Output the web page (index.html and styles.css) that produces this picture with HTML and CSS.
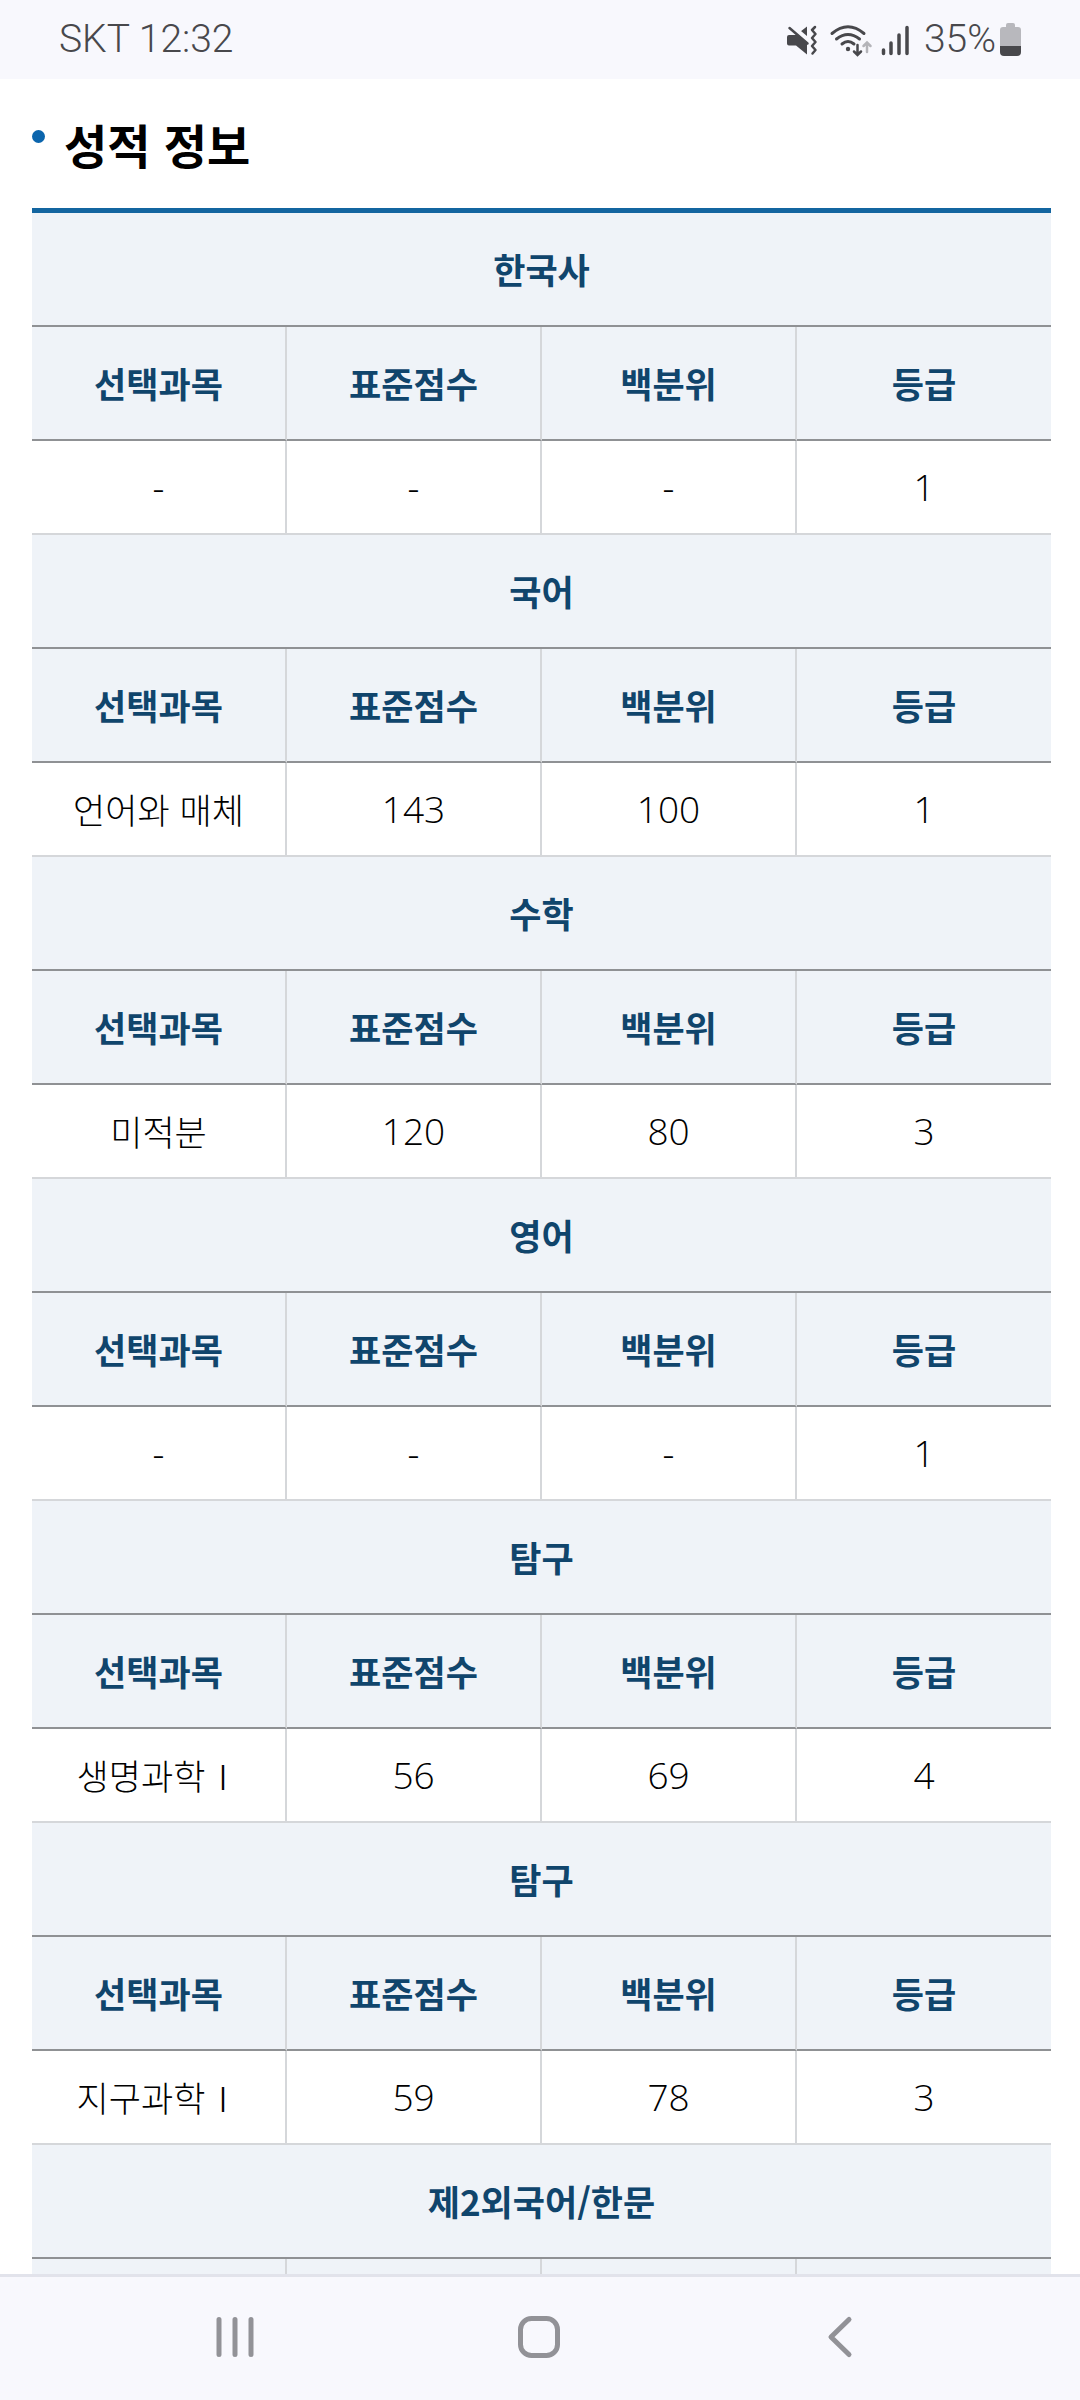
FILE: index.html
```html
<!DOCTYPE html>
<html lang="ko">
<head>
<meta charset="utf-8">
<title>성적 정보</title>
<link rel="stylesheet" href="styles.css">
</head>
<body>
<header class="status">
  <span class="status-left">SKT 12:32</span>
  <svg class="status-icons" viewBox="780 14 130 50" width="130" height="50">
    <g fill="#48484c">
      <path d="M786 34h7l11-8.500v28l-11-9h-7q-2 0-2-2v-6.500q0-2 2-2z"/>
    </g>
    <path d="M787 24l20 17" stroke="#f8f8fd" stroke-width="5"/>
    <path d="M786.500 27l18 15.500" stroke="#48484c" stroke-width="2.500" stroke-linecap="round"/>
    <path d="M812 26l-3 3 3.500 4-3.500 4 3.500 4-3.500 4 3.500 4-3 3.500" fill="none" stroke="#48484c" stroke-width="2.500" stroke-linecap="round" stroke-linejoin="round"/>
    <g fill="none" stroke="#48484c" stroke-width="3" stroke-linecap="round">
      <path d="M829 32.500q16-13.500 32 0M833.500 38q11.500-9 23 0M839 43q6-5 12 0"/>
      <path d="M854.500 44v9.500M851 50.500l3.500 3.500 3.500-3.500" stroke-width="2.500"/>
      <path d="M864 51v-9M860.500 45l3.500-3.500 3.500 3.500" stroke="#b4b4b9" stroke-width="2.500"/>
    </g>
    <circle cx="845" cy="48" r="2.200" fill="#48484c"/>
    <path d="M880.500 49v3.500M888 42v10.500M896 34v18.500M904 26.500v26" stroke="#48484c" stroke-width="3.500" stroke-linecap="round"/>
  </svg>
  <span class="percent">35%</span>
  <svg class="battery" viewBox="0 0 22 34" width="22" height="34">
    <path d="M6 4V2q0-2 2-2h5q2 0 2 2v2h3q3 0 3 3v16H0V7q0-3 3-3z" fill="#b8b8bd"/>
    <path d="M0 23h21v6q0 4-4 4H4q-4 0-4-4z" fill="#48484c"/>
  </svg>
</header>
<main class="content">
  <h1 class="title">성적 정보</h1>
  <table class="scores">
    <colgroup><col class="c"><col class="c"><col class="c"><col></colgroup>
    <tbody>
    <tr class="subject"><th colspan="4">한국사</th></tr>
    <tr class="heads"><th>선택과목</th><th>표준점수</th><th>백분위</th><th>등급</th></tr>
    <tr class="values"><td>-</td><td>-</td><td>-</td><td>1</td></tr>
    <tr class="subject"><th colspan="4">국어</th></tr>
    <tr class="heads"><th>선택과목</th><th>표준점수</th><th>백분위</th><th>등급</th></tr>
    <tr class="values"><td class="ko">언어와 매체</td><td>143</td><td>100</td><td>1</td></tr>
    <tr class="subject"><th colspan="4">수학</th></tr>
    <tr class="heads"><th>선택과목</th><th>표준점수</th><th>백분위</th><th>등급</th></tr>
    <tr class="values"><td class="ko">미적분</td><td>120</td><td>80</td><td>3</td></tr>
    <tr class="subject"><th colspan="4">영어</th></tr>
    <tr class="heads"><th>선택과목</th><th>표준점수</th><th>백분위</th><th>등급</th></tr>
    <tr class="values"><td>-</td><td>-</td><td>-</td><td>1</td></tr>
    <tr class="subject"><th colspan="4">탐구</th></tr>
    <tr class="heads"><th>선택과목</th><th>표준점수</th><th>백분위</th><th>등급</th></tr>
    <tr class="values"><td class="ko">생명과학Ⅰ</td><td>56</td><td>69</td><td>4</td></tr>
    <tr class="subject"><th colspan="4">탐구</th></tr>
    <tr class="heads"><th>선택과목</th><th>표준점수</th><th>백분위</th><th>등급</th></tr>
    <tr class="values"><td class="ko">지구과학Ⅰ</td><td>59</td><td>78</td><td>3</td></tr>
    <tr class="subject"><th colspan="4">제2외국어/한문</th></tr>
    <tr class="heads"><th></th><th></th><th></th><th></th></tr>
    </tbody>
  </table>
</main>
<nav class="navbar">
  <svg viewBox="0 0 60 60" width="60" height="60"><path d="M13 13.500v35M29 13.500v35M45 13.500v35"/></svg>
  <svg viewBox="0 0 60 60" width="60" height="60"><rect x="12.500" y="12.500" width="37" height="37" rx="11"/></svg>
  <svg viewBox="0 0 60 60" width="60" height="60"><path d="M39 13.500L21 31l18 17.500"/></svg>
</nav>
</body>
</html>
```
FILE: styles.css
```css
body {
  margin: 0;
  height: 2400px;
  display: flex;
  flex-direction: column;
  overflow: hidden;
  background: #fff;
  color: #000;
  font-family: "Noto Sans CJK KR", sans-serif;
}

.status {
  flex: none;
  box-sizing: border-box;
  display: flex;
  align-items: center;
  height: 79px;
  padding: 0 58px 0 59px;
  background: #f8f8fd;
  color: #48484c;
  font: 300 39px/79px Roboto, sans-serif;
}

.status-left { margin-right: auto; }
.percent { margin: 0 4px 0 11px; }

.content {
  flex: 1;
  min-height: 0;
  overflow: hidden;
  padding: 0 29px 0 32px;
}

.title {
  display: flex;
  align-items: center;
  height: 129px;
  margin: 0;
  font-size: 47px;
  font-weight: 700;
  line-height: 129px;
}

.title::before {
  content: "";
  width: 13px;
  height: 13px;
  margin: -14px 19px 0 0;
  border-radius: 50%;
  background: #0b65ad;
}

.scores {
  width: 1019px;
  table-layout: fixed;
  border-collapse: separate;
  border-spacing: 0;
  border-top: 5px solid #1365a0;
  text-align: center;
}

.c { width: 255px; }

.scores th,
.scores td {
  box-sizing: border-box;
  padding: 0;
  line-height: 50px;
  white-space: nowrap;
}

.scores th {
  height: 114px;
  background: #eff3f8;
  border-bottom: 2px solid #8f9194;
  color: #10456c;
  font-size: 35px;
  font-weight: 700;
}

.scores td {
  height: 94px;
  border-bottom: 2px solid #d5d7da;
  font-family: "Open Sans", "Noto Sans CJK KR", sans-serif;
  font-size: 37px;
  font-weight: 300;
}

.scores td.ko {
  font-family: "Noto Sans CJK KR", sans-serif;
  font-size: 35px;
}

.heads th:not(:last-child),
.values td:not(:last-child) { border-right: 2px solid #d5d7da; }

.navbar {
  flex: none;
  box-sizing: border-box;
  display: flex;
  justify-content: space-between;
  height: 126px;
  padding: 29px 210px 0 206px;
  border-top: 3px solid #e2e3eb;
  background: #f8f8fd;
}

.navbar svg {
  fill: none;
  stroke: #929297;
  stroke-width: 5;
  stroke-linecap: round;
  stroke-linejoin: round;
}
```
